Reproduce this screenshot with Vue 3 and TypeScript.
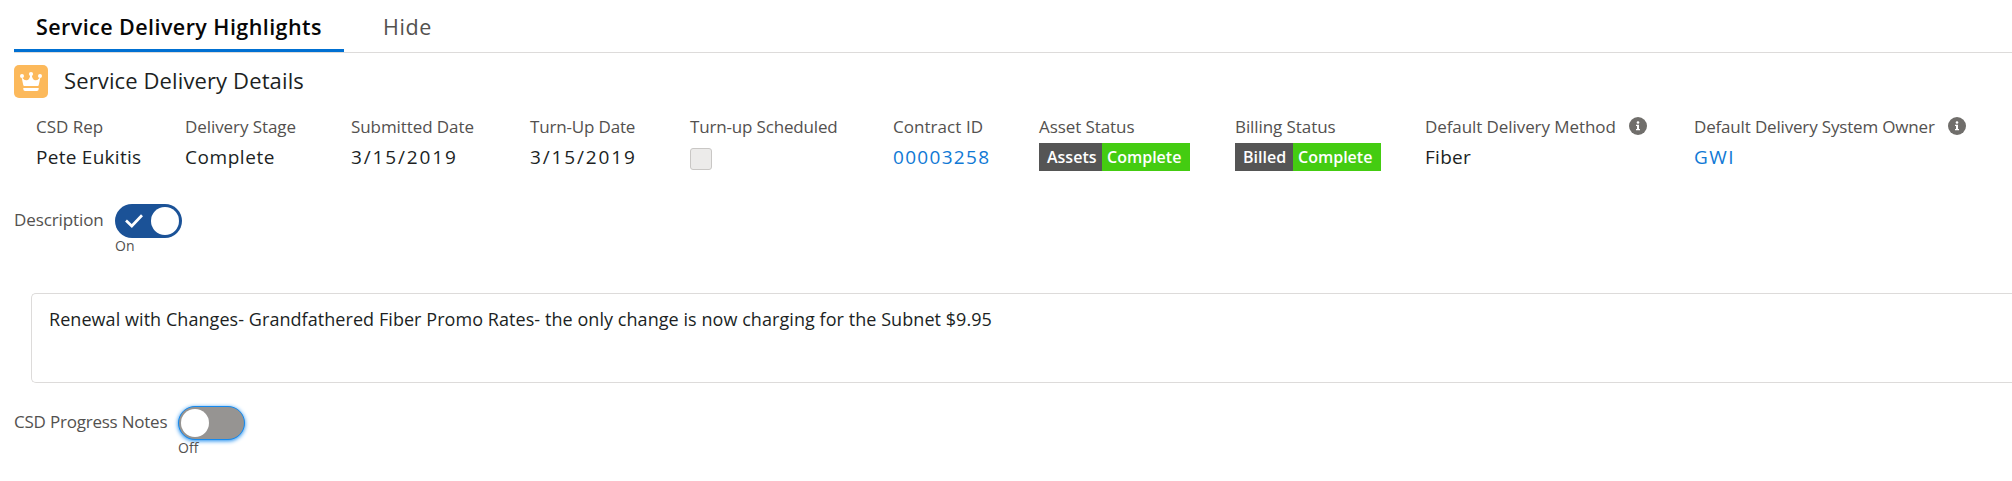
<script setup lang="ts">
import { ref } from 'vue'

interface Field {
  label: string
  kind: 'text' | 'date' | 'number' | 'link' | 'checkbox' | 'badge'
  value?: string
  badge?: string
  info?: boolean
  cls: string
}

const fields: Field[] = [
  { label: 'CSD Rep', kind: 'text', value: 'Pete Eukitis', cls: 'rep' },
  { label: 'Delivery Stage', kind: 'text', value: 'Complete', cls: 'stage' },
  { label: 'Submitted Date', kind: 'date', value: '3/15/2019', cls: 'submitted' },
  { label: 'Turn-Up Date', kind: 'date', value: '3/15/2019', cls: 'turnup' },
  { label: 'Turn-up Scheduled', kind: 'checkbox', cls: 'scheduled' },
  { label: 'Contract ID', kind: 'number', value: '00003258', cls: 'contract' },
  { label: 'Asset Status', kind: 'badge', badge: 'Assets', value: 'Complete', cls: 'asset' },
  { label: 'Billing Status', kind: 'badge', badge: 'Billed', value: 'Complete', cls: 'billing' },
  { label: 'Default Delivery Method', kind: 'text', value: 'Fiber', info: true, cls: 'method' },
  { label: 'Default Delivery System Owner', kind: 'link', value: 'GWI', info: true, cls: 'owner' },
]

const description = ref('Renewal with Changes- Grandfathered Fiber Promo Rates- the only change is now charging for the Subnet $9.95')
const showDescription = ref(true)
const showNotes = ref(false)
</script>

<template>
  <main class="panel">
    <nav class="tabs">
      <a class="tab active">Service Delivery Highlights</a>
      <a class="tab">Hide</a>
    </nav>

    <header class="heading">
      <span class="crown">
        <svg viewBox="0 0 34 33" width="34" height="33">
          <g fill="#fff">
            <circle cx="8" cy="11" r="2" />
            <circle cx="17" cy="9" r="2.1" />
            <circle cx="26" cy="11" r="2" />
            <path d="M7.6 12.2 Q10.4 15.6 13 15.2 Q15.8 14.6 16.2 10 H17.8 Q18.2 14.6 21 15.2 Q23.6 15.6 26.4 12.2 L24.7 20.2 Q24.5 21 23.7 21 H10.3 Q9.5 21 9.3 20.2 Z" />
            <path d="M9.3 23 H24.7 V24 Q24.7 26 22.9 26 H11.1 Q9.3 26 9.3 24 Z" />
          </g>
        </svg>
      </span>
      <h1>Service Delivery Details</h1>
    </header>

    <section class="fields">
      <div v-for="f in fields" :key="f.label" class="field" :class="f.cls">
        <div class="label">
          <span>{{ f.label }}</span>
          <svg v-if="f.info" class="info" viewBox="0 0 18 18" width="18" height="18">
            <circle cx="9" cy="9" r="9" fill="#706e6b" />
            <circle cx="9" cy="5.5" r="1.3" fill="#fff" />
            <path d="M7 7.7 H10 V12 H11 V13.2 H7 V12 H8 V8.9 H7 Z" fill="#fff" />
          </svg>
        </div>
        <span v-if="f.kind === 'checkbox'" class="checkbox"></span>
        <div v-else-if="f.kind === 'badge'" class="badge">
          <span class="badge-name">{{ f.badge }}</span>
          <span class="badge-state">{{ f.value }}</span>
        </div>
        <div v-else class="value" :class="f.kind">{{ f.value }}</div>
      </div>
    </section>

    <section class="switch-row">
      <span class="switch-label">Description</span>
      <div class="switch" @click="showDescription = !showDescription">
        <span class="track" :class="{ on: showDescription }">
          <svg v-if="showDescription" viewBox="0 0 20 16" width="20" height="16">
            <path d="M2 7.5 L7.8 13 L18 2.2" fill="none" stroke="#fff" stroke-width="2.7" />
          </svg>
          <span class="thumb"></span>
        </span>
        <span class="state">{{ showDescription ? 'On' : 'Off' }}</span>
      </div>
    </section>

    <div class="note">{{ description }}</div>

    <section class="switch-row notes">
      <span class="switch-label">CSD Progress Notes</span>
      <div class="switch" @click="showNotes = !showNotes">
        <span class="track focused" :class="{ on: showNotes }">
          <span class="thumb"></span>
        </span>
        <span class="state">{{ showNotes ? 'On' : 'Off' }}</span>
      </div>
    </section>
  </main>
</template>

<style>
body { background: #fff; overflow: hidden; }
</style>

<style scoped>
.panel {
  height: 481px;
  width: 2012px;
  overflow: hidden;
  padding-left: 14px;
  box-sizing: border-box;
  font-family: "Open Sans", "Noto Sans", sans-serif;
  font-weight: 400;
  color: #201f1f;
  white-space: nowrap;
}
.tabs {
  display: flex;
  height: 53px;
  box-sizing: border-box;
  border-bottom: 1px solid #dddbda;
}
.tab {
  height: 52px;
  box-sizing: border-box;
  padding-left: 39px;
  line-height: 54px;
  font-size: 21.5px;
  color: #53514f;
  letter-spacing: 0.6px;
}
.tab.active {
  width: 330px;
  padding-left: 22px;
  border-bottom: 3px solid #0070d2;
  font-weight: 600;
  letter-spacing: 0.43px;
  color: #080707;
}
.heading {
  display: flex;
  align-items: flex-start;
  gap: 16px;
  margin-top: 12px;
  height: 33px;
}
.crown {
  width: 34px;
  height: 33px;
  border-radius: 5px;
  background: #fcb95b;
}
.crown svg { display: block; }
h1 {
  margin: 0;
  font-size: 22px;
  font-weight: 400;
  line-height: 30px;
  letter-spacing: 0.12px;
}
.fields {
  display: flex;
  padding-left: 22px;
  margin-top: 16px;
  height: 71px;
}
.field { flex: none; }
.rep { width: 149px; }
.stage { width: 166px; }
.submitted { width: 179px; }
.turnup { width: 160px; }
.scheduled { width: 203px; }
.contract { width: 146px; }
.asset { width: 196px; }
.billing { width: 190px; }
.method { width: 269px; }
.owner { width: 280px; }
.label {
  display: flex;
  align-items: center;
  height: 24px;
  font-size: 17px;
  letter-spacing: -0.08px;
  color: #53514f;
}
.rep .label { letter-spacing: 0; }
.turnup .label, .scheduled .label { letter-spacing: -0.17px; }
.owner .label { letter-spacing: -0.17px; }
.contract .label { letter-spacing: 0.05px; }
.info { margin-left: 13px; }
.value {
  margin-top: 5px;
  height: 28px;
  line-height: 28px;
  font-size: 19px;
  letter-spacing: 0.27px;
}
.stage .value { letter-spacing: 0.55px; }
.value.date { letter-spacing: 1.85px; }
.value.number { letter-spacing: 1.3px; color: #1079d5; }
.value.link { letter-spacing: 1.4px; color: #1079d5; }
.checkbox {
  display: block;
  width: 22px;
  height: 22px;
  margin-top: 10px;
  box-sizing: border-box;
  border: 1px solid #c9c7c5;
  border-radius: 3px;
  background: #ecebea;
}
.badge {
  display: flex;
  height: 28px;
  margin-top: 5px;
  line-height: 29px;
  font-size: 16px;
  font-weight: 600;
  color: #fff;
}
.badge-name {
  width: 63px;
  padding-left: 8px;
  box-sizing: border-box;
  background: #555;
}
.billing .badge-name { width: 58px; }
.badge-state {
  width: 88px;
  padding-left: 5px;
  box-sizing: border-box;
  background: #4c1;
}
.switch-row {
  display: flex;
  margin-top: 19px;
  height: 54px;
}
.switch-label {
  font-size: 17px;
  line-height: 32px;
  color: #53514f;
  width: 101px;
  letter-spacing: -0.1px;
}
.notes .switch-label { width: 164px; letter-spacing: -0.22px; }
.switch { display: flex; flex-direction: column; }
.track {
  display: flex;
  align-items: center;
  justify-content: flex-start;
  width: 67px;
  height: 34px;
  padding: 0 3px;
  box-sizing: border-box;
  border-radius: 17px;
  background: #969492;
}
.track.on { background: #1b5297; justify-content: flex-end; }
.track svg { margin-right: 7px; }
.track.focused {
  border: 1px solid #1589ee;
  padding: 0 2px;
  box-shadow: 0 1px 4px #1589ee;
}
.thumb { width: 28px; height: 28px; border-radius: 50%; background: #fff; }
.state {
  font-size: 14px;
  line-height: 16px;
  color: #53514f;
}
.note {
  height: 90px;
  margin: 35px 0 0 17px;
  padding: 11px 17px;
  box-sizing: border-box;
  border: 1px solid #dddbda;
  border-right: 0;
  border-radius: 5px 0 0 5px;
  font-size: 18px;
  line-height: 28px;
  letter-spacing: 0.06px;
}
.notes { margin-top: 23px; }
</style>
